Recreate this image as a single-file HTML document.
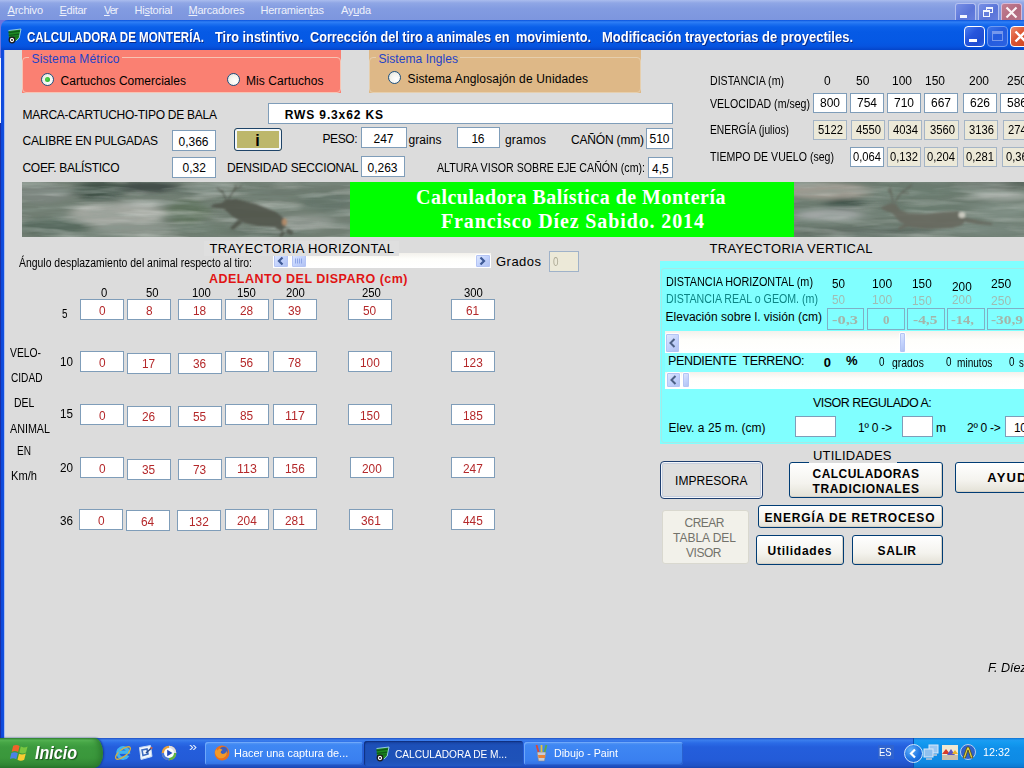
<!DOCTYPE html>
<html lang="es">
<head>
<meta charset="utf-8">
<title>CALCULADORA DE MONTERÍA</title>
<style>
html,body{margin:0;padding:0;}
body{width:1024px;height:768px;overflow:hidden;position:relative;background:#dcdcdc;font-family:"Liberation Sans",Arial,sans-serif;font-size:12px;color:#000;}
.a{position:absolute;box-sizing:border-box;}
.t{position:absolute;white-space:nowrap;line-height:1;transform-origin:0 50%;}
.in{position:absolute;box-sizing:border-box;background:#fff;border:1px solid #7f9db9;}
.bg{position:absolute;box-sizing:border-box;background:#ece9d8;border:1px solid #a5b5c6;}
.dis{position:absolute;box-sizing:border-box;border:1px solid #7fb0c6;}
.btn{position:absolute;box-sizing:border-box;border:1px solid #003c74;border-radius:3px;background:linear-gradient(#ffffff,#f4f3ee 60%,#e3e1d6);box-shadow:inset -1px -1px 0 #d6d0c5;}
.sb{position:absolute;box-sizing:border-box;background:linear-gradient(#f3f1ec,#fefefb 40%,#ffffff);}
.sbb{position:absolute;box-sizing:border-box;border:1px solid #fff;border-radius:2px;background:linear-gradient(135deg,#e1eafe,#c3d3fd 50%,#aebff0);box-shadow:0 0 0 1px #b4c4f4 inset;}
</style>
</head>
<body>
<!-- ===== menubar of background window ===== -->
<div class="a" id="menubar" style="left:0;top:0;width:1024px;height:21px;background:linear-gradient(#aabcee 0,#8fa6e5 3px,#829be1 9px,#7d96de 20px);"></div>
<!-- ===== window frame ===== -->
<div class="a" style="left:0;top:20px;width:8px;height:8px;background:#6d74de;"></div>
<div class="a" id="titlebar" style="left:1px;top:20px;width:1023px;height:30px;border-radius:7px 0 0 0;background:linear-gradient(#0a52dc 0,#3080f6 2px,#1d70f0 4px,#0b60e9 7px,#065ae5 12px,#0558e4 22px,#0654e0 26px,#064dd6 28px,#0444c8 30px);"></div>
<div class="a" id="leftborder" style="left:0;top:50px;width:5px;height:688px;background:linear-gradient(90deg,#1a2ea6 0,#1a2ea6 1px,#0d47da 1px,#1150e0 4px,#a9bdf0 4px,#a9bdf0 5px);"></div>
<div class="a" style="left:0;top:20px;width:1px;height:38px;background:#6d74de;"></div>
<div class="a" style="left:0;top:58px;width:1px;height:65px;background:#f4f4fa;"></div>
<!-- ===== caption buttons of the background window ===== -->
<div class="a" style="left:955px;top:3px;width:21px;height:17px;border:1px solid #b4c0f0;border-bottom:0;border-radius:3px 3px 0 0;background:linear-gradient(135deg,#7890e6,#5a74d8 60%,#667fde);"></div>
<div class="a" style="left:960px;top:15px;width:7px;height:3px;background:#f4f6fe;"></div>
<div class="a" style="left:978px;top:3px;width:21px;height:17px;border:1px solid #b4c0f0;border-bottom:0;border-radius:3px 3px 0 0;background:linear-gradient(135deg,#7890e6,#5a74d8 60%,#667fde);"></div>
<div class="a" style="left:986px;top:7px;width:7px;height:6px;border:1px solid #f4f6fe;border-top-width:2px;"></div>
<div class="a" style="left:983px;top:10px;width:7px;height:7px;border:1px solid #f4f6fe;border-top-width:2px;background:#667fdc;"></div>
<div class="a" style="left:1001px;top:3px;width:21px;height:17px;border:1px solid #d6b8d6;border-bottom:0;border-radius:3px 3px 0 0;background:linear-gradient(135deg,#c27f92,#b26a80 60%,#b87488);"></div>
<svg class="a" style="left:1001px;top:3px" width="21" height="17" viewBox="0 0 21 17"><path d="M5.500 4.500l10 10M15.500 4.500l-10 10" stroke="#fbf3f6" stroke-width="2.200" fill="none"/></svg>
<!-- ===== title bar icon and buttons ===== -->
<svg class="a" style="left:7px;top:28px" width="15" height="16" viewBox="0 0 15 16"><path d="M1.500 2.500l12.500-1.500-1.800 9-3.200 3-7-2.500z" fill="#1e8a22"/><path d="M1.600 4.600l11.200-1.600M1.800 7.400l10.200-1.200" stroke="#0f5a18" stroke-width="1.400"/><path d="M2 9.600l9.500-0.800" stroke="#0f5a18" stroke-width="1"/><path d="M1.500 2.500l12.500-1.500-1.800 9-3.200 3" fill="none" stroke="#9fd0f0" stroke-width="0.900"/><circle cx="5" cy="12" r="2.800" fill="#fff" stroke="#1a1a1a" stroke-width="1.300"/><circle cx="5" cy="12" r="0.900" fill="#111"/></svg>
<div class="a" style="left:964px;top:26px;width:21px;height:21px;border:1px solid #fff;border-radius:4px;background:linear-gradient(135deg,#4a7ff0,#2655dc 40%,#1f4ed2 75%,#2a62e2);"></div>
<div class="a" style="left:969px;top:39px;width:8px;height:3px;background:#fff;"></div>
<div class="a" style="left:987px;top:26px;width:21px;height:21px;border:1px solid #6f9bf0;border-radius:4px;background:linear-gradient(135deg,#3a74ea,#255cde 45%,#2a62e2);"></div>
<div class="a" style="left:992px;top:31px;width:11px;height:10px;border:1px solid #7698ec;border-top-width:3px;"></div>
<div class="a" style="left:1010px;top:26px;width:21px;height:21px;border:1px solid #fff;border-radius:4px;background:linear-gradient(135deg,#ec8a6e,#dc5430 45%,#cc4420);"></div>
<svg class="a" style="left:1010px;top:26px" width="14" height="21" viewBox="0 0 14 21"><path d="M5.5 5.5l10 10M15.5 5.5l-10 10" stroke="#fff" stroke-width="2.4" fill="none"/></svg>
<!-- ===== Sistema Métrico / Sistema Ingles ===== -->
<div class="a" style="left:22px;top:50px;width:319px;height:43px;background:#fa8072;"></div>
<div class="a" style="left:22px;top:57px;width:319px;height:36px;border:1px solid #f7c4b4;border-radius:4px;"></div>
<div class="a" style="left:29px;top:53px;width:93px;height:10px;background:#fa8072;"></div>
<div class="a" style="left:369px;top:50px;width:272px;height:43px;background:#deb887;"></div>
<div class="a" style="left:369px;top:57px;width:272px;height:36px;border:1px solid #e6cfae;border-radius:4px;"></div>
<div class="a" style="left:376px;top:53px;width:84px;height:10px;background:#deb887;"></div>
<!-- radio buttons -->
<div class="a" style="left:41px;top:73px;width:13px;height:13px;border:1px solid #1c5180;border-radius:50%;background:radial-gradient(circle at 65% 65%,#fff 0,#f4f4ee 50%,#dcdcd4 100%);"></div>
<div class="a" style="left:45px;top:77px;width:5px;height:5px;border-radius:50%;background:radial-gradient(circle at 40% 40%,#55d551,#21a121);"></div>
<div class="a" style="left:227px;top:73px;width:13px;height:13px;border:1px solid #1c5180;border-radius:50%;background:radial-gradient(circle at 65% 65%,#fff 0,#f4f4ee 50%,#dcdcd4 100%);"></div>
<div class="a" style="left:388px;top:71px;width:13px;height:13px;border:1px solid #1c5180;border-radius:50%;background:radial-gradient(circle at 65% 65%,#fff 0,#f4f4ee 50%,#dcdcd4 100%);"></div>
<!-- ===== cartridge data ===== -->
<div class="in" style="left:268px;top:103px;width:405px;height:21px;"></div>
<div class="in" style="left:172px;top:130px;width:44px;height:21px;"></div>
<div class="in" style="left:172px;top:157px;width:44px;height:21px;"></div>
<div class="a" style="left:234px;top:128px;width:48px;height:23px;border:1px solid #1f4468;border-radius:3px;background:#bdb76b;box-shadow:inset 0 0 0 2px #f3f6f8;"></div>
<div class="in" style="left:361px;top:127px;width:46px;height:21px;"></div>
<div class="in" style="left:457px;top:127px;width:43px;height:21px;"></div>
<div class="in" style="left:646px;top:128px;width:27px;height:21px;"></div>
<div class="in" style="left:361px;top:156px;width:44px;height:21px;"></div>
<div class="in" style="left:648px;top:157px;width:25px;height:21px;"></div>
<!-- ===== ballistic table (top right) ===== -->
<div class="in" style="left:813px;top:93px;width:34px;height:20px;"></div>
<div class="in" style="left:850px;top:93px;width:34px;height:20px;"></div>
<div class="in" style="left:887px;top:93px;width:34px;height:20px;"></div>
<div class="in" style="left:924px;top:93px;width:34px;height:20px;"></div>
<div class="in" style="left:963px;top:93px;width:34px;height:20px;"></div>
<div class="in" style="left:1000px;top:93px;width:34px;height:20px;"></div>
<div class="bg" style="left:813px;top:120px;width:34px;height:20px;"></div>
<div class="bg" style="left:851px;top:120px;width:34px;height:20px;"></div>
<div class="bg" style="left:888px;top:120px;width:34px;height:20px;"></div>
<div class="bg" style="left:924px;top:120px;width:35px;height:20px;"></div>
<div class="bg" style="left:964px;top:120px;width:34px;height:20px;"></div>
<div class="bg" style="left:1003px;top:120px;width:34px;height:20px;"></div>
<div class="in" style="left:850px;top:147px;width:34px;height:20px;"></div>
<div class="bg" style="left:887px;top:147px;width:34px;height:20px;"></div>
<div class="bg" style="left:924px;top:147px;width:34px;height:20px;"></div>
<div class="bg" style="left:963px;top:147px;width:34px;height:20px;"></div>
<div class="bg" style="left:1002px;top:147px;width:34px;height:20px;"></div>
<!-- ===== banner ===== -->
<svg class="a" style="left:22px;top:182px" width="328" height="55" viewBox="0 0 328 55">
<defs><filter id="bl1" x="-20%" y="-50%" width="140%" height="200%"><feGaussianBlur stdDeviation="6 2.2"/></filter><filter id="nzl" x="0" y="0" width="100%" height="100%"><feTurbulence type="fractalNoise" baseFrequency="0.018 0.14" numOctaves="3" seed="4"/><feColorMatrix type="matrix" values="0 0 0 0 0.72  0 0 0 0 0.75  0 0 0 0 0.72  2.4 0 0 0 -1.05"/></filter><filter id="nzd" x="0" y="0" width="100%" height="100%"><feTurbulence type="fractalNoise" baseFrequency="0.02 0.16" numOctaves="3" seed="11"/><feColorMatrix type="matrix" values="0 0 0 0 0.25  0 0 0 0 0.32  0 0 0 0 0.28  2.4 0 0 0 -1.05"/></filter><filter id="bl2" x="-10%" y="-10%" width="120%" height="120%"><feGaussianBlur stdDeviation="1.2 0.8"/></filter></defs>
<rect width="328" height="55" fill="#717e73"/>
<g filter="url(#bl1)">
<ellipse cx="20" cy="12" rx="30" ry="9" fill="#7b857f"/>
<ellipse cx="78" cy="9" rx="26" ry="10" fill="#42524a"/>
<ellipse cx="128" cy="5" rx="30" ry="6" fill="#434e48"/>
<ellipse cx="185" cy="8" rx="35" ry="6" fill="#66756b"/>
<ellipse cx="95" cy="32" rx="48" ry="11" fill="#a2a69f"/>
<ellipse cx="120" cy="22" rx="22" ry="3" fill="#aab0ab"/>
<ellipse cx="32" cy="45" rx="36" ry="9" fill="#586a5e"/>
<ellipse cx="110" cy="46" rx="40" ry="6" fill="#8b948c"/>
<ellipse cx="165" cy="30" rx="22" ry="12" fill="#60735f"/>
<ellipse cx="180" cy="47" rx="30" ry="6" fill="#6c7c6e"/>
<ellipse cx="255" cy="10" rx="60" ry="7" fill="#6d7a6f"/>
<ellipse cx="285" cy="40" rx="28" ry="7" fill="#8c948d"/>
<ellipse cx="305" cy="20" rx="26" ry="9" fill="#65756a"/>
<ellipse cx="240" cy="50" rx="40" ry="4" fill="#66756a"/>
</g>
<rect width="328" height="55" filter="url(#nzl)" opacity="0.42"/><rect width="328" height="55" filter="url(#nzd)" opacity="0.42"/>
<g filter="url(#bl2)" fill="#51554c" stroke="none" opacity="0.9">
<path d="M188 25l4-3 7-1 5-3 10-1 20 5 20 8 10 8 0 6-12 1-16-1-14-3-12-7-8-7-8-1z"/>
<path d="M216 38l-8 8 3 2 10-8zM258 42l14 8-3 3-16-7zM262 46l-5 8 3 1 6-8z"/>
<path d="M204 18l-4-10M206 18l6-10 8-4M200 10l-5-4M212 9l2-6" stroke="#51554c" stroke-width="1.200" fill="none"/>
<ellipse cx="262.500" cy="40" rx="2.500" ry="3.500" fill="#b58a66"/>
</g>
</svg>
<div class="a" style="left:350px;top:182px;width:444px;height:55px;background:#00ff00;"></div>
<svg class="a" style="left:794px;top:182px" width="230" height="55" viewBox="0 0 230 55">
<defs><filter id="bl3" x="-20%" y="-50%" width="140%" height="200%"><feGaussianBlur stdDeviation="7 2"/></filter></defs>
<rect width="230" height="55" fill="#6c7b70"/>
<g filter="url(#bl3)">
<ellipse cx="32" cy="9" rx="46" ry="8" fill="#9d9a90"/>
<ellipse cx="52" cy="22" rx="20" ry="6" fill="#43544c"/>
<ellipse cx="120" cy="10" rx="45" ry="7" fill="#6b7c70"/>
<ellipse cx="205" cy="3" rx="40" ry="4" fill="#545e56"/>
<ellipse cx="210" cy="14" rx="30" ry="5" fill="#9ea59f"/>
<ellipse cx="35" cy="33" rx="35" ry="6" fill="#a0a6a4"/>
<ellipse cx="70" cy="50" rx="70" ry="5" fill="#5f6c64"/>
<ellipse cx="205" cy="30" rx="30" ry="8" fill="#7d8c82"/>
<ellipse cx="190" cy="48" rx="50" ry="6" fill="#76857b"/>
<ellipse cx="130" cy="28" rx="40" ry="8" fill="#6b7b70"/>
</g>
<rect width="230" height="55" filter="url(#nzl)" opacity="0.34"/><rect width="230" height="55" filter="url(#nzd)" opacity="0.42"/>
<g filter="url(#bl2)" fill="#67695f" opacity="0.9">
<path d="M86 26l6-3 6-2 4 1 4 6 8 3 18 1 18-2 14-1 6 3 2 6-4 5-10 3-24 1-18-2-10-5-8-9-6-2z"/>
<path d="M114 40l-10 6 1 2 14-5zM172 36l14 3 12 2 0 2-14-1-12-2z"/>
<path d="M99 20l-2-10-1-5M101 20l6-9 7-5 4-3M97 11l-3-3M108 11l7 0" stroke="#5d5e54" stroke-width="1.200" fill="none"/>
<ellipse cx="168" cy="33" rx="3.500" ry="3" fill="#d2d0c6"/>
</g>
</svg>
<!-- ===== Trayectoria horizontal ===== -->
<div class="sb" style="left:273px;top:253px;width:218px;height:15px;"></div>
<div class="sbb" style="left:273px;top:253px;width:16px;height:15px;"></div>
<div class="sbb" style="left:475px;top:254px;width:16px;height:14px;"></div>
<div class="sbb" style="left:291px;top:253px;width:16px;height:15px;"></div>
<svg class="a" style="left:273px;top:253px" width="218" height="15" viewBox="0 0 218 15"><path d="M9.500 4.500l-3.500 3.500 3.500 3.500M207.500 4.500l3.500 3.500-3.500 3.500" stroke="#3f5a96" stroke-width="2.200" fill="none"/><path d="M22.500 5.500v5M24.500 5.500v5M26.500 5.500v5M28.500 5.500v5" stroke="#8fa6e6" stroke-width="1"/></svg>
<div class="a" style="left:204px;top:241px;width:195px;height:15px;background:#dfdfdf;"></div>
<div class="a" style="left:549px;top:251px;width:30px;height:21px;border:1px solid #9fb2c9;background:#ece9d8;"></div>
<!-- grid of lead values -->
<div class="in" style="left:80px;top:299px;width:44px;height:21px;"></div>
<div class="in" style="left:127px;top:299px;width:44px;height:21px;"></div>
<div class="in" style="left:178px;top:299px;width:44px;height:21px;"></div>
<div class="in" style="left:225px;top:299px;width:44px;height:21px;"></div>
<div class="in" style="left:273px;top:299px;width:44px;height:21px;"></div>
<div class="in" style="left:348px;top:299px;width:44px;height:21px;"></div>
<div class="in" style="left:451px;top:299px;width:44px;height:21px;"></div>
<div class="in" style="left:80px;top:351px;width:44px;height:21px;"></div>
<div class="in" style="left:127px;top:352.5px;width:44px;height:21px;"></div>
<div class="in" style="left:178px;top:352.5px;width:44px;height:21px;"></div>
<div class="in" style="left:225px;top:351px;width:44px;height:21px;"></div>
<div class="in" style="left:273px;top:351px;width:44px;height:21px;"></div>
<div class="in" style="left:348px;top:351px;width:44px;height:21px;"></div>
<div class="in" style="left:451px;top:351px;width:44px;height:21px;"></div>
<div class="in" style="left:80px;top:404px;width:44px;height:21px;"></div>
<div class="in" style="left:127px;top:405.5px;width:44px;height:21px;"></div>
<div class="in" style="left:178px;top:405.5px;width:44px;height:21px;"></div>
<div class="in" style="left:225px;top:404px;width:44px;height:21px;"></div>
<div class="in" style="left:273px;top:404px;width:44px;height:21px;"></div>
<div class="in" style="left:348px;top:404px;width:44px;height:21px;"></div>
<div class="in" style="left:451px;top:404px;width:44px;height:21px;"></div>
<div class="in" style="left:80px;top:457px;width:44px;height:21px;"></div>
<div class="in" style="left:127px;top:458.5px;width:44px;height:21px;"></div>
<div class="in" style="left:178px;top:458.5px;width:44px;height:21px;"></div>
<div class="in" style="left:225px;top:457px;width:44px;height:21px;"></div>
<div class="in" style="left:273px;top:457px;width:44px;height:21px;"></div>
<div class="in" style="left:350px;top:457px;width:44px;height:21px;"></div>
<div class="in" style="left:451px;top:457px;width:44px;height:21px;"></div>
<div class="in" style="left:79px;top:509px;width:44px;height:21px;"></div>
<div class="in" style="left:126px;top:510px;width:44px;height:21px;"></div>
<div class="in" style="left:177px;top:510px;width:44px;height:21px;"></div>
<div class="in" style="left:225px;top:509px;width:44px;height:21px;"></div>
<div class="in" style="left:273px;top:509px;width:44px;height:21px;"></div>
<div class="in" style="left:349px;top:509px;width:44px;height:21px;"></div>
<div class="in" style="left:451px;top:509px;width:44px;height:21px;"></div>
<!-- ===== Trayectoria vertical panel ===== -->
<div class="a" style="left:660px;top:261px;width:364px;height:183px;background:#80ffff;"></div>
<div class="a" style="left:661px;top:268px;width:370px;height:175px;border:1px solid #a5e9e6;border-radius:3px;"></div>
<div class="dis" style="left:827px;top:308px;width:37px;height:22px;"></div>
<div class="dis" style="left:867px;top:308px;width:38px;height:22px;"></div>
<div class="dis" style="left:907px;top:308px;width:38px;height:22px;"></div>
<div class="dis" style="left:947px;top:308px;width:38px;height:22px;"></div>
<div class="dis" style="left:987px;top:308px;width:40px;height:22px;"></div>
<div class="sb" style="left:665px;top:331px;width:359px;height:22px;"></div>
<div class="sbb" style="left:665px;top:333px;width:15px;height:20px;"></div>
<div class="sbb" style="left:899px;top:332px;width:7px;height:21px;"></div>
<svg class="a" style="left:665px;top:333px" width="15" height="20" viewBox="0 0 15 20"><path d="M9.500 6l-4 4 4 4" stroke="#4d6185" stroke-width="2" fill="none"/></svg>
<div class="a" style="left:665px;top:353px;width:359px;height:19px;background:#8cffff;"></div>
<div class="sb" style="left:665px;top:371.500px;width:359px;height:17px;"></div>
<div class="sbb" style="left:666px;top:372px;width:15px;height:16px;"></div>
<div class="sbb" style="left:682px;top:372px;width:8px;height:16px;"></div>
<svg class="a" style="left:666px;top:372px" width="15" height="16" viewBox="0 0 15 16"><path d="M9.500 4l-4 4 4 4" stroke="#4d6185" stroke-width="2" fill="none"/></svg>
<div class="in" style="left:795px;top:416px;width:41px;height:21px;"></div>
<div class="in" style="left:902px;top:416px;width:31px;height:21px;"></div>
<div class="in" style="left:1005px;top:416px;width:31px;height:21px;"></div>
<!-- ===== buttons ===== -->
<div class="btn" style="left:660px;top:461px;width:103px;height:38px;border:1px solid #1f3f70;border-radius:4px;background:#dedede;box-shadow:inset 0 0 0 1px #f4f6fa,inset 0 0 0 2px #c5cddc;"></div>
<div class="btn" style="left:789px;top:462px;width:154px;height:36px;"></div>
<div class="a" style="left:809px;top:448px;width:88px;height:15px;background:#dcdcdc;"></div>
<div class="btn" style="left:955px;top:462px;width:90px;height:31px;"></div>
<div class="btn" style="left:758px;top:505px;width:185px;height:23px;"></div>
<div class="a" style="left:662px;top:510px;width:87px;height:54px;border:1px solid #d9d8cf;border-radius:3px;background:#f2f1ea;"></div>
<div class="btn" style="left:756px;top:535px;width:88px;height:30px;"></div>
<div class="btn" style="left:852px;top:535px;width:91px;height:30px;"></div>
<!-- ===== taskbar ===== -->
<div class="a" style="left:0;top:738px;width:1024px;height:30px;background:linear-gradient(#1f4fc2 0,#3b7fee 2px,#2b6be6 5px,#245edc 9px,#235bd8 22px,#1f51c4 28px,#1a44ae 30px);"></div>
<div class="a" style="left:0;top:738px;width:103px;height:30px;border-radius:0 9px 9px 0/0 15px 15px 0;background:linear-gradient(#2f7d2d 0,#57b455 2px,#45a545 5px,#3c9a3e 9px,#3a973b 20px,#318634 27px,#277229 30px);box-shadow:1px 0 2px #153a8a, inset -6px 0 6px -3px #2a7a2c;"></div>
<svg class="a" style="left:10px;top:744px" width="20" height="19" viewBox="0 0 20 19"><defs><filter id="fb"><feGaussianBlur stdDeviation="0.45"/></filter></defs><g filter="url(#fb)"><path d="M3.200 1.800q3.200-1.800 6.400 0.200l-1.500 6q-3-1.800-6.400-0.200z" fill="#f0642c"/><path d="M10.800 2.600q3 1.700 6.800-0.200l-1.600 6.200q-3.400 1.800-6.700 0z" fill="#79c640"/><path d="M1.400 9q3.200-1.800 6.400 0.200l-1.500 6q-3-1.800-6.400-0.200z" fill="#4c82e8"/><path d="M9 9.800q3 1.700 6.800-0.200l-1.600 6.200q-3.400 1.800-6.700 0z" fill="#f8cc30"/></g></svg>
<!-- quick launch -->
<svg class="a" style="left:114px;top:744px" width="19" height="18" viewBox="0 0 19 18"><path d="M13.800 11.500a5.300 5.300 0 1 1 0.600-3.300h-9.500" fill="none" stroke="#3fb3f2" stroke-width="3.300"/><ellipse cx="9" cy="9" rx="9" ry="3.600" transform="rotate(-38 9 9)" fill="none" stroke="#d9b040" stroke-width="1.300"/><path d="M4.500 8.200h9.500" stroke="#3fb3f2" stroke-width="2.600"/></svg>
<svg class="a" style="left:138px;top:744px" width="16" height="17" viewBox="0 0 16 17"><path d="M1.500 3.500l11-2 1.500 11-11 3z" fill="#f2f7fd" stroke="#c5d9f3" stroke-width="1"/><path d="M4 6l5-1 1 5-5 1.500z" fill="none" stroke="#3d6cc0" stroke-width="1.600"/><path d="M8 9l5.500-5" stroke="#2b4a86" stroke-width="1.500"/><path d="M12 3.500l2.500-0.500-0.500 2.500z" fill="#e0603a"/></svg>
<svg class="a" style="left:161px;top:745px" width="16" height="16" viewBox="0 0 16 16"><circle cx="8" cy="8" r="7.300" fill="#e9a23c"/><path d="M8 8l7.300 0a7.300 7.300 0 0 1-7.300 7.300z" fill="#5db545"/><path d="M8 8l-7.300 0a7.300 7.300 0 0 0 7.300 7.300z" fill="#4b79d6"/><path d="M8 8l0-7.300a7.300 7.300 0 0 1 7.300 7.300z" fill="#d9dde6"/><circle cx="8" cy="8" r="5" fill="#fbfcfe"/><path d="M6.200 4.800l5.300 3.200-5.300 3.200z" fill="#2348b8"/></svg>
<!-- task buttons -->
<div class="a" style="left:205px;top:742px;width:158px;height:23px;border-radius:3px;background:linear-gradient(#5a9bf7 0,#3f87f3 3px,#3a80f0 18px,#3170e2 23px);box-shadow:inset 1px 1px 0 #6ea8fa, inset -1px -1px 0 #2a62cf;"></div>
<div class="a" style="left:364px;top:741px;width:159px;height:25px;border-radius:3px;background:linear-gradient(#163f9e 0,#1d50b8 4px,#1e52b8 20px,#2158c2 25px);box-shadow:inset 1px 1px 1px #10307f;"></div>
<div class="a" style="left:524px;top:742px;width:159px;height:23px;border-radius:3px;background:linear-gradient(#5a9bf7 0,#3f87f3 3px,#3a80f0 18px,#3170e2 23px);box-shadow:inset 1px 1px 0 #6ea8fa, inset -1px -1px 0 #2a62cf;"></div>
<svg class="a" style="left:214px;top:745px" width="16" height="16" viewBox="0 0 16 16"><circle cx="8" cy="8" r="7.400" fill="#e8701f"/><circle cx="9.500" cy="6" r="4.300" fill="#3a5fc0"/><path d="M5.500 3.500q2 0.200 3 1.500-2 0.800-1.800 2.800 1.300 1.800 4 0.600 1.600-1 2-2.600 0.800 3.600-1.600 6-2.800 2.400-6.600 1-3.200-1.800-3.600-6 0.600-1.800 1.800-2.800 0.200 1.200 1 1.600 0.800-1.600 1.800-2.100z" fill="#f29a2a"/></svg>
<svg class="a" style="left:375px;top:746px" width="15" height="16" viewBox="0 0 15 16"><path d="M1.500 2.500l12.500-1.500-1.800 9-3.200 3-7-2.500z" fill="#1e8a22"/><path d="M1.600 4.600l11.200-1.600M1.800 7.400l10.200-1.200" stroke="#0f5a18" stroke-width="1.400"/><path d="M2 9.600l9.500-0.800" stroke="#0f5a18" stroke-width="1"/><path d="M1.500 2.500l12.500-1.500-1.800 9-3.200 3" fill="none" stroke="#9fd0f0" stroke-width="0.900"/><circle cx="5" cy="12" r="2.800" fill="#fff" stroke="#1a1a1a" stroke-width="1.300"/><circle cx="5" cy="12" r="0.900" fill="#111"/></svg>
<svg class="a" style="left:535px;top:744px" width="13" height="18" viewBox="0 0 13 18"><path d="M2 8h9l-1.500 9h-6z" fill="#c9cdd6" stroke="#7d828e" stroke-width="0.600"/><path d="M3.500 8l-2-7" stroke="#d84a38" stroke-width="1.800"/><path d="M6.500 8v-7" stroke="#e8c13a" stroke-width="1.800"/><path d="M9.500 8l2-7" stroke="#5aa94a" stroke-width="1.800"/><path d="M3 11h7v3h-6.500z" fill="#e8833a"/></svg>
<!-- tray -->
<div class="a" style="left:878px;top:745px;width:16px;height:14px;background:#2f63cf;"></div>
<div class="a" style="left:913px;top:738px;width:111px;height:30px;background:linear-gradient(#0f6fd1 0,#1c9cf3 2px,#139af0 5px,#0f8fe9 10px,#0e8ae4 24px,#0c79d1 29px,#0a63b8 30px);border-left:1px solid #0d4fae;"></div>
<div class="a" style="left:904px;top:744px;width:19px;height:19px;border-radius:50%;border:1px solid #cfe4fb;background:radial-gradient(circle at 35% 30%,#5fb0fa,#1f74e2 55%,#155ccc);"></div>
<svg class="a" style="left:904px;top:744px" width="19" height="19" viewBox="0 0 19 19"><path d="M11 5.500l-4 4 4 4" stroke="#fff" stroke-width="2.200" fill="none"/></svg>
<svg class="a" style="left:923px;top:744px" width="16" height="17" viewBox="0 0 16 17"><rect x="6" y="1" width="9" height="8" fill="#9cc8f2" stroke="#d9e9fa"/><rect x="1" y="5" width="9" height="8" fill="#8fc0ee" stroke="#d9e9fa"/><path d="M3 15h6M10 11h4" stroke="#c8ccd6" stroke-width="1.600"/></svg>
<svg class="a" style="left:942px;top:745px" width="16" height="15" viewBox="0 0 16 15"><rect width="16" height="15" fill="#f0e9d2"/><path d="M0 9l4-5 4 5z" fill="#d83a2a"/><path d="M5 10l4-6 4 6z" fill="#5a55c0"/><path d="M10 9l3-4 3 4z" fill="#e8b32a"/><rect y="10" width="16" height="5" fill="#c8bfae"/></svg>
<svg class="a" style="left:960px;top:744px" width="16" height="17" viewBox="0 0 16 17"><circle cx="8" cy="8" r="7.500" fill="#2f62c9" stroke="#d9e4f6" stroke-width="0.800"/><path d="M3 14l4-11h2l4 11h-2.300l-2.700-8-2.700 8z" fill="#e6d23a" stroke="#4b4a1e" stroke-width="0.800"/></svg>

<span class="t" style='left:7.50px;top:4.69px;font-size:11px;color:#eef1fb;letter-spacing:-0.198px;'><u>A</u>rchivo</span>
<span class="t" style='left:59.50px;top:4.69px;font-size:11px;color:#eef1fb;letter-spacing:-0.250px;'><u>E</u>ditar</span>
<span class="t" style='left:104.00px;top:4.69px;font-size:11px;color:#eef1fb;letter-spacing:-1.008px;'><u>V</u>er</span>
<span class="t" style='left:134.50px;top:4.69px;font-size:11px;color:#eef1fb;letter-spacing:-0.217px;'>Hi<u>s</u>torial</span>
<span class="t" style='left:188.50px;top:4.69px;font-size:11px;color:#eef1fb;letter-spacing:-0.233px;'><u>M</u>arcadores</span>
<span class="t" style='left:260.50px;top:4.69px;font-size:11px;color:#eef1fb;letter-spacing:-0.232px;'>Herramien<u>t</u>as</span>
<span class="t" style='left:341.00px;top:4.69px;font-size:11px;color:#eef1fb;letter-spacing:-0.254px;'>Ay<u>u</u>da</span>
<span class="t" style='left:27.00px;top:29.65px;font-size:14px;color:#fff;font-weight:bold;transform:scaleX(0.8266);text-shadow:1px 1px 0 #0a2a8a;'>CALCULADORA DE MONTERÍA.</span>
<span class="t" style='left:215.00px;top:29.65px;font-size:14px;color:#fff;font-weight:bold;transform:scaleX(0.9147);text-shadow:1px 1px 0 #0a2a8a;'>Tiro instintivo.</span>
<span class="t" style='left:310.00px;top:29.65px;font-size:14px;color:#fff;font-weight:bold;transform:scaleX(0.9060);text-shadow:1px 1px 0 #0a2a8a;'>Corrección del tiro a animales en</span>
<span class="t" style='left:516.00px;top:29.65px;font-size:14px;color:#fff;font-weight:bold;transform:scaleX(0.9094);text-shadow:1px 1px 0 #0a2a8a;'>movimiento.</span>
<span class="t" style='left:602.00px;top:29.65px;font-size:14px;color:#fff;font-weight:bold;transform:scaleX(0.9270);text-shadow:1px 1px 0 #0a2a8a;'>Modificación trayectorias de proyectiles.</span>
<span class="t" style='left:31.50px;top:52.84px;font-size:12px;color:#2342c8;letter-spacing:0.141px;'>Sistema Métrico</span>
<span class="t" style='left:60.50px;top:74.84px;font-size:12px;letter-spacing:0.039px;'>Cartuchos Comerciales</span>
<span class="t" style='left:246.00px;top:74.84px;font-size:12px;letter-spacing:0.068px;'>Mis Cartuchos</span>
<span class="t" style='left:378.50px;top:52.84px;font-size:12px;color:#2342c8;letter-spacing:0.061px;'>Sistema Ingles</span>
<span class="t" style='left:407.50px;top:72.84px;font-size:12px;letter-spacing:0.151px;'>Sistema Anglosajón de Unidades</span>
<span class="t" style='left:22.50px;top:108.59px;font-size:12px;letter-spacing:-0.255px;'>MARCA-CARTUCHO-TIPO DE BALA</span>
<span class="t" style='left:284.75px;top:108.59px;font-size:12px;font-weight:bold;letter-spacing:0.868px;'>RWS 9.3x62 KS</span>
<span class="t" style='left:22.50px;top:134.84px;font-size:12px;letter-spacing:-0.253px;'>CALIBRE EN PULGADAS</span>
<span class="t" style='left:178.50px;top:135.59px;font-size:12px;letter-spacing:-0.008px;'>0,366</span>
<span class="t" style='left:255.30px;top:133.46px;font-size:16px;font-weight:bold;'>i</span>
<span class="t" style='left:322.50px;top:132.84px;font-size:12px;letter-spacing:-0.422px;'>PESO:</span>
<span class="t" style='left:373.50px;top:132.84px;font-size:12px;letter-spacing:-0.016px;'>247</span>
<span class="t" style='left:408.50px;top:134.34px;font-size:12px;letter-spacing:0.062px;'>grains</span>
<span class="t" style='left:471.50px;top:132.84px;font-size:12px;letter-spacing:-0.359px;'>16</span>
<span class="t" style='left:505.00px;top:134.34px;font-size:12px;letter-spacing:0.197px;'>gramos</span>
<span class="t" style='left:571.00px;top:134.44px;font-size:12px;letter-spacing:-0.184px;'>CAÑÓN (mm)</span>
<span class="t" style='left:649.60px;top:133.34px;font-size:12px;letter-spacing:-0.116px;'>510</span>
<span class="t" style='left:22.50px;top:161.84px;font-size:12px;letter-spacing:-0.311px;'>COEF. BALÍSTICO</span>
<span class="t" style='left:182.50px;top:162.34px;font-size:12px;letter-spacing:0.047px;'>0,32</span>
<span class="t" style='left:227.00px;top:161.84px;font-size:12px;letter-spacing:-0.188px;'>DENSIDAD SECCIONAL</span>
<span class="t" style='left:367.50px;top:161.84px;font-size:12px;letter-spacing:-0.008px;'>0,263</span>
<span class="t" style='left:437.00px;top:161.84px;font-size:12px;transform:scaleX(0.8871);'>ALTURA VISOR SOBRE EJE CAÑÓN (cm):</span>
<span class="t" style='left:652.00px;top:162.54px;font-size:12px;letter-spacing:0.056px;'>4,5</span>
<span class="t" style='left:710.00px;top:74.84px;font-size:12px;transform:scaleX(0.8833);'>DISTANCIA (m)</span>
<span class="t" style='left:710.00px;top:98.34px;font-size:12px;transform:scaleX(0.8822);'>VELOCIDAD (m/seg)</span>
<span class="t" style='left:710.00px;top:123.84px;font-size:12px;transform:scaleX(0.8584);'>ENERGÍA (julios)</span>
<span class="t" style='left:710.00px;top:150.84px;font-size:12px;transform:scaleX(0.8813);'>TIEMPO DE VUELO (seg)</span>
<span class="t" style='left:823.66px;top:75.34px;font-size:12px;transform:scaleX(0.9977);'>0</span>
<span class="t" style='left:855.83px;top:75.34px;font-size:12px;transform:scaleX(0.9988);'>50</span>
<span class="t" style='left:891.99px;top:75.34px;font-size:12px;transform:scaleX(0.9992);'>100</span>
<span class="t" style='left:924.99px;top:75.34px;font-size:12px;transform:scaleX(0.9992);'>150</span>
<span class="t" style='left:968.99px;top:75.34px;font-size:12px;transform:scaleX(0.9992);'>200</span>
<span class="t" style='left:1007.49px;top:75.34px;font-size:12px;transform:scaleX(0.9992);'>250</span>
<span class="t" style='left:819.99px;top:97.34px;font-size:12px;transform:scaleX(0.9992);'>800</span>
<span class="t" style='left:856.99px;top:97.34px;font-size:12px;transform:scaleX(0.9992);'>754</span>
<span class="t" style='left:893.99px;top:97.34px;font-size:12px;transform:scaleX(0.9992);'>710</span>
<span class="t" style='left:930.99px;top:97.34px;font-size:12px;transform:scaleX(0.9992);'>667</span>
<span class="t" style='left:969.99px;top:97.34px;font-size:12px;transform:scaleX(0.9992);'>626</span>
<span class="t" style='left:1006.99px;top:97.34px;font-size:12px;transform:scaleX(0.9992);'>586</span>
<span class="t" style='left:817.50px;top:124.34px;font-size:12px;transform:scaleX(0.9362);'>5122</span>
<span class="t" style='left:855.50px;top:124.34px;font-size:12px;transform:scaleX(0.9362);'>4550</span>
<span class="t" style='left:892.50px;top:124.34px;font-size:12px;transform:scaleX(0.9362);'>4034</span>
<span class="t" style='left:929.50px;top:124.34px;font-size:12px;transform:scaleX(0.9362);'>3560</span>
<span class="t" style='left:968.50px;top:124.34px;font-size:12px;transform:scaleX(0.9362);'>3136</span>
<span class="t" style='left:1008.00px;top:124.34px;font-size:12px;transform:scaleX(0.9362);'>2744</span>
<span class="t" style='left:853.00px;top:151.34px;font-size:12px;transform:scaleX(0.9324);'>0,064</span>
<span class="t" style='left:890.00px;top:151.34px;font-size:12px;transform:scaleX(0.9324);'>0,132</span>
<span class="t" style='left:927.00px;top:151.34px;font-size:12px;transform:scaleX(0.9324);'>0,204</span>
<span class="t" style='left:966.00px;top:151.34px;font-size:12px;transform:scaleX(0.9324);'>0,281</span>
<span class="t" style='left:1005.50px;top:151.34px;font-size:12px;transform:scaleX(0.9324);'>0,368</span>
<span class="t" style='left:416.00px;top:187.33px;font-size:20px;font-family:"Liberation Serif", "Times New Roman", serif;color:#fff;font-weight:bold;letter-spacing:0.489px;'>Calculadora Balística de Montería</span>
<span class="t" style='left:441.00px;top:210.83px;font-size:20px;font-family:"Liberation Serif", "Times New Roman", serif;color:#fff;font-weight:bold;letter-spacing:0.885px;'>Francisco Díez Sabido. 2014</span>
<span class="t" style='left:209.50px;top:241.50px;font-size:13px;letter-spacing:0.359px;'>TRAYECTORIA HORIZONTAL</span>
<span class="t" style='left:19.00px;top:257.34px;font-size:12px;transform:scaleX(0.8689);'>Ángulo desplazamiento del animal respecto al tiro:</span>
<span class="t" style='left:496.00px;top:255.00px;font-size:13px;letter-spacing:0.472px;'>Grados</span>
<span class="t" style='left:552.80px;top:256.09px;font-size:12px;color:#aeab97;transform:scaleX(0.8224);'>0</span>
<span class="t" style='left:209.00px;top:272.92px;font-size:12.5px;color:#e01414;font-weight:bold;letter-spacing:0.486px;'>ADELANTO DEL DISPARO (cm)</span>
<span class="t" style='left:101.35px;top:286.59px;font-size:12px;transform:scaleX(0.9421);'>0</span>
<span class="t" style='left:145.70px;top:286.59px;font-size:12px;transform:scaleX(0.9432);'>50</span>
<span class="t" style='left:191.55px;top:286.59px;font-size:12px;transform:scaleX(0.9435);'>100</span>
<span class="t" style='left:236.55px;top:286.59px;font-size:12px;transform:scaleX(0.9435);'>150</span>
<span class="t" style='left:286.05px;top:286.59px;font-size:12px;transform:scaleX(0.9435);'>200</span>
<span class="t" style='left:362.05px;top:286.59px;font-size:12px;transform:scaleX(0.9435);'>250</span>
<span class="t" style='left:464.05px;top:286.59px;font-size:12px;transform:scaleX(0.9435);'>300</span>
<span class="t" style='left:98.50px;top:304.59px;font-size:12px;color:#b4282a;transform:scaleX(0.9869);'>0</span>
<span class="t" style='left:145.50px;top:304.59px;font-size:12px;color:#b4282a;transform:scaleX(0.9869);'>8</span>
<span class="t" style='left:193.20px;top:304.59px;font-size:12px;color:#b4282a;transform:scaleX(0.9881);'>18</span>
<span class="t" style='left:240.20px;top:304.59px;font-size:12px;color:#b4282a;transform:scaleX(0.9881);'>28</span>
<span class="t" style='left:288.20px;top:304.59px;font-size:12px;color:#b4282a;transform:scaleX(0.9881);'>39</span>
<span class="t" style='left:363.20px;top:304.59px;font-size:12px;color:#b4282a;transform:scaleX(0.9881);'>50</span>
<span class="t" style='left:466.20px;top:304.59px;font-size:12px;color:#b4282a;transform:scaleX(0.9881);'>61</span>
<span class="t" style='left:98.50px;top:356.59px;font-size:12px;color:#b4282a;transform:scaleX(0.9869);'>0</span>
<span class="t" style='left:142.20px;top:358.09px;font-size:12px;color:#b4282a;transform:scaleX(0.9881);'>17</span>
<span class="t" style='left:193.20px;top:358.09px;font-size:12px;color:#b4282a;transform:scaleX(0.9881);'>36</span>
<span class="t" style='left:240.20px;top:356.59px;font-size:12px;color:#b4282a;transform:scaleX(0.9881);'>56</span>
<span class="t" style='left:288.20px;top:356.59px;font-size:12px;color:#b4282a;transform:scaleX(0.9881);'>78</span>
<span class="t" style='left:359.90px;top:356.59px;font-size:12px;color:#b4282a;transform:scaleX(0.9885);'>100</span>
<span class="t" style='left:462.90px;top:356.59px;font-size:12px;color:#b4282a;transform:scaleX(0.9885);'>123</span>
<span class="t" style='left:98.50px;top:409.59px;font-size:12px;color:#b4282a;transform:scaleX(0.9869);'>0</span>
<span class="t" style='left:142.20px;top:411.09px;font-size:12px;color:#b4282a;transform:scaleX(0.9881);'>26</span>
<span class="t" style='left:193.20px;top:411.09px;font-size:12px;color:#b4282a;transform:scaleX(0.9881);'>55</span>
<span class="t" style='left:240.20px;top:409.59px;font-size:12px;color:#b4282a;transform:scaleX(0.9881);'>85</span>
<span class="t" style='left:284.90px;top:409.59px;font-size:12px;color:#b4282a;transform:scaleX(1.0344);'>117</span>
<span class="t" style='left:359.90px;top:409.59px;font-size:12px;color:#b4282a;transform:scaleX(0.9885);'>150</span>
<span class="t" style='left:462.90px;top:409.59px;font-size:12px;color:#b4282a;transform:scaleX(0.9885);'>185</span>
<span class="t" style='left:98.50px;top:462.59px;font-size:12px;color:#b4282a;transform:scaleX(0.9869);'>0</span>
<span class="t" style='left:142.20px;top:464.09px;font-size:12px;color:#b4282a;transform:scaleX(0.9881);'>35</span>
<span class="t" style='left:193.20px;top:464.09px;font-size:12px;color:#b4282a;transform:scaleX(0.9881);'>73</span>
<span class="t" style='left:236.90px;top:462.59px;font-size:12px;color:#b4282a;transform:scaleX(1.0344);'>113</span>
<span class="t" style='left:284.90px;top:462.59px;font-size:12px;color:#b4282a;transform:scaleX(0.9885);'>156</span>
<span class="t" style='left:361.90px;top:462.59px;font-size:12px;color:#b4282a;transform:scaleX(0.9885);'>200</span>
<span class="t" style='left:462.90px;top:462.59px;font-size:12px;color:#b4282a;transform:scaleX(0.9885);'>247</span>
<span class="t" style='left:97.50px;top:514.59px;font-size:12px;color:#b4282a;transform:scaleX(0.9869);'>0</span>
<span class="t" style='left:141.20px;top:515.59px;font-size:12px;color:#b4282a;transform:scaleX(0.9881);'>64</span>
<span class="t" style='left:188.90px;top:515.59px;font-size:12px;color:#b4282a;transform:scaleX(0.9885);'>132</span>
<span class="t" style='left:236.90px;top:514.59px;font-size:12px;color:#b4282a;transform:scaleX(0.9885);'>204</span>
<span class="t" style='left:284.90px;top:514.59px;font-size:12px;color:#b4282a;transform:scaleX(0.9885);'>281</span>
<span class="t" style='left:360.90px;top:514.59px;font-size:12px;color:#b4282a;transform:scaleX(0.9885);'>361</span>
<span class="t" style='left:462.90px;top:514.59px;font-size:12px;color:#b4282a;transform:scaleX(0.9885);'>445</span>
<span class="t" style='left:61.50px;top:308.34px;font-size:12px;transform:scaleX(0.8224);'>5</span>
<span class="t" style='left:59.50px;top:355.84px;font-size:12px;transform:scaleX(0.9731);'>10</span>
<span class="t" style='left:59.50px;top:407.84px;font-size:12px;transform:scaleX(0.9731);'>15</span>
<span class="t" style='left:59.50px;top:461.84px;font-size:12px;transform:scaleX(0.9731);'>20</span>
<span class="t" style='left:59.50px;top:514.84px;font-size:12px;transform:scaleX(0.9731);'>36</span>
<span class="t" style='left:10.00px;top:347.34px;font-size:12px;transform:scaleX(0.8607);'>VELO-</span>
<span class="t" style='left:10.50px;top:371.59px;font-size:12px;transform:scaleX(0.8435);'>CIDAD</span>
<span class="t" style='left:13.50px;top:396.59px;font-size:12px;transform:scaleX(0.8675);'>DEL</span>
<span class="t" style='left:10.00px;top:422.84px;font-size:12px;transform:scaleX(0.8951);'>ANIMAL</span>
<span class="t" style='left:16.50px;top:444.84px;font-size:12px;transform:scaleX(0.8397);'>EN</span>
<span class="t" style='left:10.50px;top:469.84px;font-size:12px;transform:scaleX(0.9281);'>Km/h</span>
<span class="t" style='left:709.50px;top:241.50px;font-size:13px;letter-spacing:0.289px;'>TRAYECTORIA VERTICAL</span>
<span class="t" style='left:665.50px;top:275.84px;font-size:12px;transform:scaleX(0.9011);'>DISTANCIA HORIZONTAL (m)</span>
<span class="t" style='left:665.50px;top:292.84px;font-size:12px;color:#0c8484;transform:scaleX(0.8870);'>DISTANCIA REAL o GEOM. (m)</span>
<span class="t" style='left:665.50px;top:310.84px;font-size:12px;letter-spacing:0.015px;'>Elevación sobre l. visión (cm)</span>
<span class="t" style='left:831.50px;top:277.84px;font-size:12px;transform:scaleX(0.9731);'>50</span>
<span class="t" style='left:872.30px;top:278.34px;font-size:12px;transform:scaleX(1.0034);'>100</span>
<span class="t" style='left:911.70px;top:278.34px;font-size:12px;transform:scaleX(0.9835);'>150</span>
<span class="t" style='left:952.00px;top:280.64px;font-size:12px;transform:scaleX(0.9835);'>200</span>
<span class="t" style='left:991.40px;top:278.34px;font-size:12px;transform:scaleX(1.0084);'>250</span>
<span class="t" style='left:831.50px;top:294.34px;font-size:12px;color:#9fbdb4;transform:scaleX(0.9731);'>50</span>
<span class="t" style='left:872.30px;top:294.34px;font-size:12px;color:#9fbdb4;transform:scaleX(1.0034);'>100</span>
<span class="t" style='left:911.70px;top:295.24px;font-size:12px;color:#9fbdb4;transform:scaleX(0.9835);'>150</span>
<span class="t" style='left:952.00px;top:294.14px;font-size:12px;color:#9fbdb4;transform:scaleX(0.9835);'>200</span>
<span class="t" style='left:991.40px;top:295.34px;font-size:12px;color:#9fbdb4;transform:scaleX(1.0084);'>250</span>
<span class="t" style='left:831.50px;top:313.25px;font-size:13.5px;font-family:"Liberation Serif", "Times New Roman", serif;color:#a3b5aa;font-weight:bold;transform:scaleX(1.2164);'>-0,3</span>
<span class="t" style='left:883.00px;top:313.25px;font-size:13.5px;font-family:"Liberation Serif", "Times New Roman", serif;color:#a3b5aa;font-weight:bold;transform:scaleX(0.9630);'>0</span>
<span class="t" style='left:912.60px;top:313.25px;font-size:13.5px;font-family:"Liberation Serif", "Times New Roman", serif;color:#a3b5aa;font-weight:bold;transform:scaleX(1.1415);'>-4,5</span>
<span class="t" style='left:951.00px;top:313.25px;font-size:13.5px;font-family:"Liberation Serif", "Times New Roman", serif;color:#a3b5aa;font-weight:bold;transform:scaleX(1.0760);'>-14,</span>
<span class="t" style='left:991.00px;top:313.25px;font-size:13.5px;font-family:"Liberation Serif", "Times New Roman", serif;color:#a3b5aa;font-weight:bold;transform:scaleX(1.1378);'>-30,9</span>
<span class="t" style='left:668.00px;top:355.42px;font-size:12.5px;letter-spacing:-0.353px;'>PENDIENTE&nbsp; TERRENO:</span>
<span class="t" style='left:823.75px;top:355.50px;font-size:13px;font-weight:bold;letter-spacing:-0.484px;'>0</span>
<span class="t" style='left:846.00px;top:354.00px;font-size:13px;font-weight:bold;letter-spacing:-0.562px;'>%</span>
<span class="t" style='left:878.50px;top:356.14px;font-size:12px;transform:scaleX(0.8224);'>0</span>
<span class="t" style='left:892.40px;top:357.09px;font-size:12px;transform:scaleX(0.8678);clip-path:inset(2px 0 0 0);'>grados</span>
<span class="t" style='left:945.80px;top:356.14px;font-size:12px;transform:scaleX(0.8224);'>0</span>
<span class="t" style='left:956.70px;top:357.09px;font-size:12px;transform:scaleX(0.8399);'>minutos</span>
<span class="t" style='left:1008.80px;top:356.14px;font-size:12px;transform:scaleX(0.8224);'>0</span>
<span class="t" style='left:1018.60px;top:357.09px;font-size:12px;transform:scaleX(0.7954);'>segundos</span>
<span class="t" style='left:813.00px;top:397.12px;font-size:12.5px;letter-spacing:-0.527px;'>VISOR REGULADO A:</span>
<span class="t" style='left:668.50px;top:421.84px;font-size:12px;letter-spacing:0.037px;'>Elev. a 25 m. (cm)</span>
<span class="t" style='left:858.00px;top:421.84px;font-size:12px;letter-spacing:-0.234px;'>1º 0 -&gt;</span>
<span class="t" style='left:936.00px;top:421.84px;font-size:12px;letter-spacing:0.000px;'>m</span>
<span class="t" style='left:967.00px;top:421.84px;font-size:12px;letter-spacing:-0.284px;'>2º 0 -&gt;</span>
<span class="t" style='left:1014.00px;top:421.84px;font-size:12px;letter-spacing:-0.359px;'>10</span>
<span class="t" style='left:813.00px;top:448.70px;font-size:13px;letter-spacing:0.214px;'>UTILIDADES</span>
<span class="t" style='left:675.00px;top:474.84px;font-size:12px;letter-spacing:0.061px;'>IMPRESORA</span>
<span class="t" style='left:812.50px;top:467.84px;font-size:12px;font-weight:bold;letter-spacing:0.470px;'>CALCULADORAS</span>
<span class="t" style='left:812.50px;top:482.84px;font-size:12px;font-weight:bold;letter-spacing:0.652px;'>TRADICIONALES</span>
<span class="t" style='left:987.30px;top:470.70px;font-size:13px;font-weight:bold;letter-spacing:1.167px;'>AYUDA</span>
<span class="t" style='left:764.50px;top:511.59px;font-size:12px;font-weight:bold;letter-spacing:0.864px;'>ENERGÍA DE RETROCESO</span>
<span class="t" style='left:684.50px;top:516.64px;font-size:12px;color:#72726a;letter-spacing:-0.504px;'>CREAR</span>
<span class="t" style='left:673.00px;top:532.14px;font-size:12px;color:#72726a;letter-spacing:-0.018px;'>TABLA DEL</span>
<span class="t" style='left:686.00px;top:547.14px;font-size:12px;color:#72726a;letter-spacing:-0.461px;'>VISOR</span>
<span class="t" style='left:767.50px;top:544.84px;font-size:12px;font-weight:bold;letter-spacing:0.738px;'>Utilidades</span>
<span class="t" style='left:877.50px;top:545.34px;font-size:12px;font-weight:bold;letter-spacing:0.625px;'>SALIR</span>
<span class="t" style='left:988.00px;top:661.37px;font-size:13.5px;font-style:italic;transform:scaleX(.93);'>F. Díez Sabido</span>
<span class="t" style='left:35.20px;top:744.59px;font-size:17.5px;color:#fff;font-weight:bold;font-style:italic;transform:scaleX(0.9234);text-shadow:1px 1px 1px #1f4f1f;'>Inicio</span>
<span class="t" style='left:233.75px;top:747.69px;font-size:11px;color:#fff;transform:scaleX(0.9937);'>Hacer una captura de...</span>
<span class="t" style='left:395.00px;top:749.09px;font-size:11px;color:#fff;transform:scaleX(0.9207);'>CALCULADORA DE M...</span>
<span class="t" style='left:553.50px;top:747.69px;font-size:11px;color:#fff;transform:scaleX(0.9690);'>Dibujo - Paint</span>
<span class="t" style='left:879.00px;top:747.19px;font-size:11px;color:#fff;transform:scaleX(0.8579);'>ES</span>
<span class="t" style='left:983.00px;top:747.19px;font-size:11px;color:#fff;transform:scaleX(0.9807);'>12:32</span>
<span class="t" style='left:188.50px;top:740.00px;font-size:13px;color:#e4eefc;transform:scaleX(1.1058);'>»</span>
</body>
</html>
